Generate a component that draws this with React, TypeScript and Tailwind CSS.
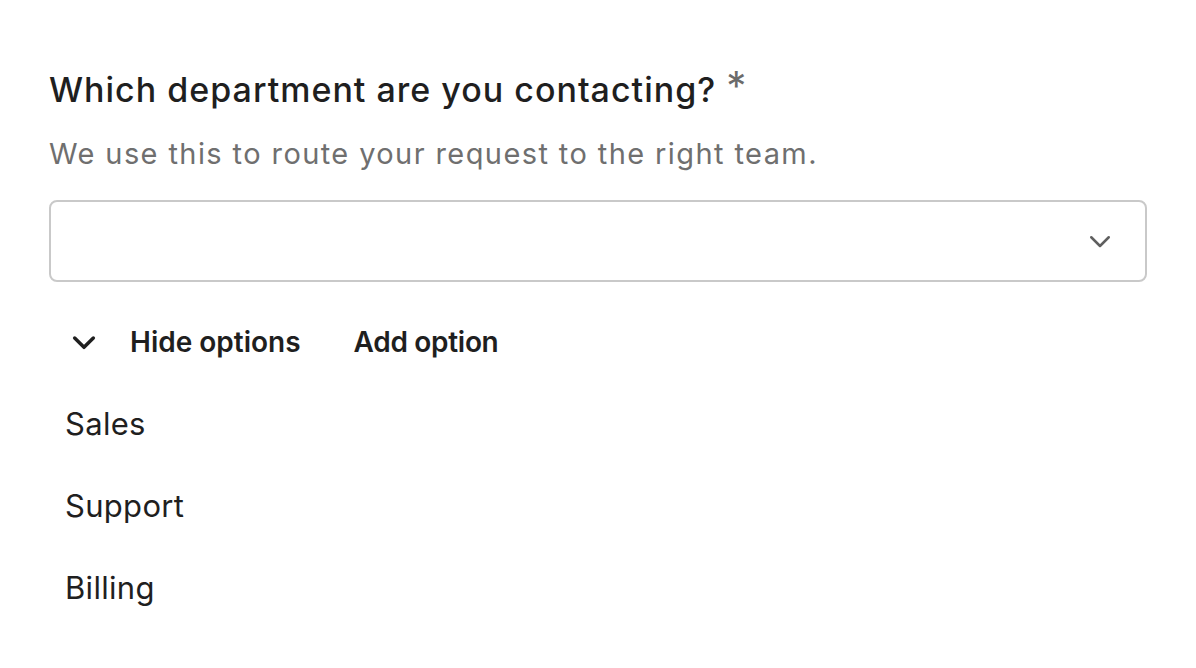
import React from "react";

const options = ["Sales", "Support", "Billing"];

function Chevron({ className }: { className?: string }) {
  return (
    <svg viewBox="0 0 24 24" fill="none" stroke="currentColor" strokeLinecap="round" strokeLinejoin="round" className={className}>
      <path d="M5 9l7 7 7-7" />
    </svg>
  );
}

export default function App() {
  return (
    <div className="min-h-screen bg-white font-['Inter',sans-serif] text-[#1f1f1f]">
      <div className="px-[49px] pt-[66px] w-[1147px]">
        {/* Question label */}
        <div className="flex items-start">
          <h2 className="text-[34px] leading-[48px] font-medium tracking-[1px]">
            Which department are you contacting?
          </h2>
          <span className="ml-[10px] -mt-[2px] text-[40px] leading-[44px] text-[#6b6b6b]">*</span>
        </div>
        <p className="mt-[20px] text-[29px] leading-[40px] text-[#6f6f6f] tracking-[1.4px]">
          We use this to route your request to the right team.
        </p>

        {/* Select box */}
        <div className="mt-[26px] h-[82px] w-[1098px] rounded-[8px] border-2 border-[#c9c9c9] flex items-center justify-end pr-[30px]">
          <Chevron className="w-[30px] h-[30px] text-[#5f5f5f] stroke-[2]" />
        </div>

        {/* Options toolbar */}
        <div className="mt-[39px] flex items-center h-[42px]">
          <div className="pl-[19px] pr-[30px]">
            <Chevron className="w-[32px] h-[32px] text-[#1f1f1f] stroke-[2.6]" />
          </div>
          <span className="text-[28px] font-semibold">Hide options</span>
          <span className="ml-[53px] text-[28px] font-semibold tracking-[-0.3px]">Add option</span>
        </div>

        {/* Option list */}
        <ul className="mt-[41px] pl-[16px] flex flex-col gap-[42px]">
          {options.map((o) => (
            <li key={o} className="text-[31px] leading-[40px] tracking-[0.3px]">
              {o}
            </li>
          ))}
        </ul>
      </div>
    </div>
  );
}
